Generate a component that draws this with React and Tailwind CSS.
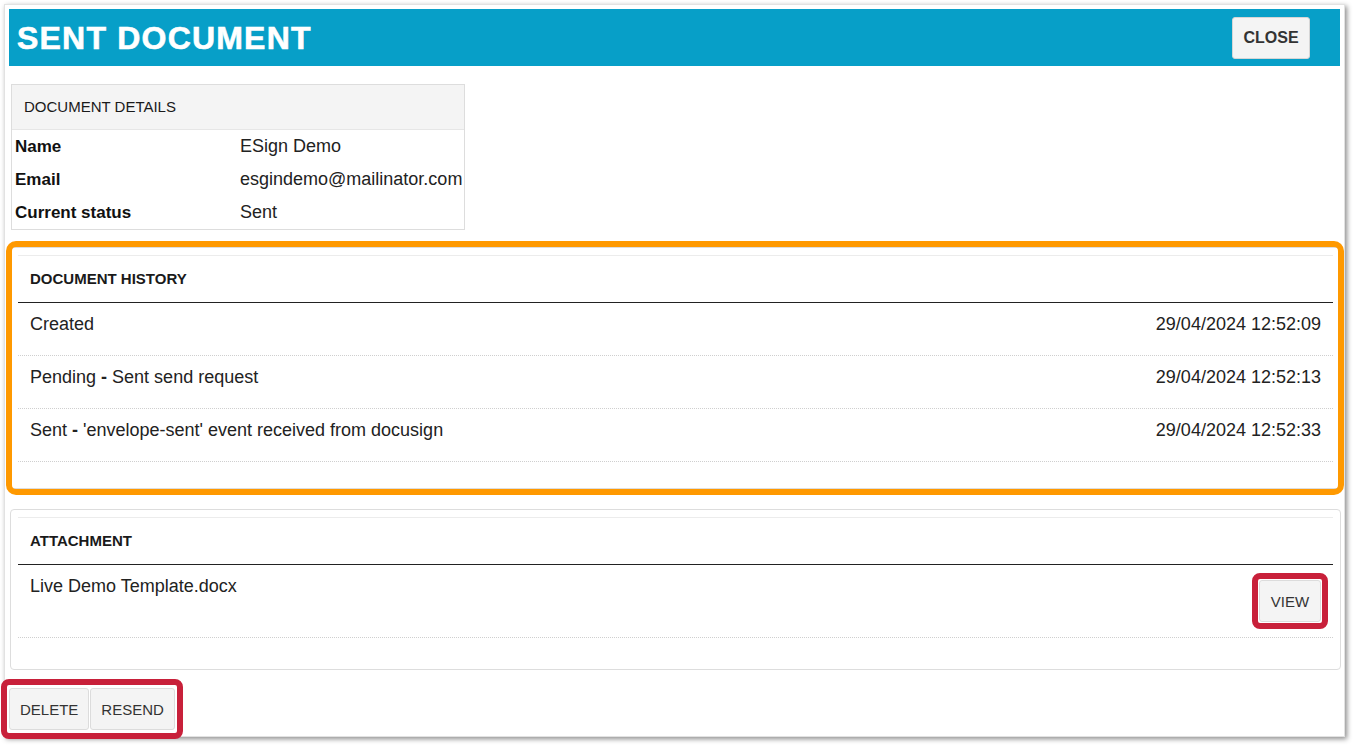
import React from "react";

const font = { fontFamily: '"Liberation Sans", Arial, sans-serif' };

const history = [
  { status: "Created", detail: "", date: "29/04/2024 12:52:09" },
  { status: "Pending", detail: "Sent send request", date: "29/04/2024 12:52:13" },
  { status: "Sent", detail: "'envelope-sent' event received from docusign", date: "29/04/2024 12:52:33" },
];

const details = [
  { label: "Name", value: "ESign Demo" },
  { label: "Email", value: "esgindemo@mailinator.com" },
  { label: "Current status", value: "Sent" },
];

function GrayButton({ children, className = "" }) {
  return (
    <button
      className={`h-[42px] px-[10px] bg-[#f4f4f4] border border-[#dcdcdc] rounded-[3px] text-[15px] text-[#333] leading-none ${className}`}
    >
      {children}
    </button>
  );
}

function SectionHead({ title }) {
  return (
    <div className="border-t border-[#ececec]">
      <div className="h-[46px] flex items-center px-3 text-[15px] font-bold text-[#1a1a1a]">{title}</div>
      <div className="h-px bg-[#222]"></div>
    </div>
  );
}

export default function App() {
  return (
    <div className="min-h-screen bg-white text-[#1f1f1f]" style={font}>
      <div className="ml-[4px] pt-[4px]">
        <div className="w-[1341px] h-[733px] border border-[#e2e2e2] bg-white p-[4px] shadow-[2px_2px_5px_rgba(0,0,0,0.45)]">
          {/* Header */}
          <div className="h-[57px] bg-[#079fc8] flex items-center justify-between pl-[8px] pr-[30px]">
            <h1 className="text-[32px] font-bold text-white tracking-[1.2px] leading-none [-webkit-text-stroke:0.6px_white]">
              SENT DOCUMENT
            </h1>
            <button className="w-[78px] h-[42px] bg-[#f4f4f4] border border-[#d6d6d6] rounded-[3px] text-[16px] font-bold text-[#333] leading-none">
              CLOSE
            </button>
          </div>

          {/* Document details */}
          <div className="mt-[18px] ml-[2px] w-[454px] border border-[#dddddd]">
            <div className="h-[45px] bg-[#f4f4f4] border-b border-[#e6e6e6] flex items-center px-3 text-[15px] text-[#1a1a1a]">
              DOCUMENT DETAILS
            </div>
            {details.map((d) => (
              <div key={d.label} className="h-[33px] grid grid-cols-[226px_1fr] items-center text-[17px]">
                <span className="pl-[3px] font-bold text-[#111]">{d.label}</span>
                <span className="pl-[2px] text-[18px] text-[#222]">{d.value}</span>
              </div>
            ))}
          </div>

          {/* Document history */}
          <div className="relative mt-[17px] ml-[1px] w-[1331px] h-[242px] border border-[#dddddd] rounded-[4px] px-[7px] pt-[7px]">
            <SectionHead title="DOCUMENT HISTORY" />
            {history.map((h) => (
              <div
                key={h.date}
                className="h-[53px] flex justify-between px-3 pt-[11px] border-b border-dotted border-[#cfcfcf] text-[18px] leading-5 text-[#222]"
              >
                <span>
                  {h.status}
                  {h.detail && (
                    <>
                      {" "}
                      <b>-</b> {h.detail}
                    </>
                  )}
                </span>
                <span>{h.date}</span>
              </div>
            ))}
            <div className="absolute -left-[5px] -right-[4px] -top-[7px] -bottom-[7px] border-[6px] border-[#ff9900] rounded-[10px] pointer-events-none"></div>
          </div>

          {/* Attachment */}
          <div className="mt-[20px] ml-[1px] w-[1331px] h-[161px] border border-[#dddddd] rounded-[4px] px-[7px] pt-[7px]">
            <SectionHead title="ATTACHMENT" />
            <div className="h-[73px] flex justify-between items-start px-3 pt-[11px] border-b border-dotted border-[#cfcfcf] text-[18px] leading-5 text-[#222]">
              <span>Live Demo Template.docx</span>
              <div className="relative mt-[4px]">
                <GrayButton className="w-[62px] h-[41px] px-0">VIEW</GrayButton>
                <div className="absolute -inset-[7px] border-[6px] border-[#c8203a] rounded-[8px] pointer-events-none"></div>
              </div>
            </div>
          </div>

          {/* Actions */}
          <div className="relative mt-[18px] inline-flex gap-[1px]">
            <GrayButton>DELETE</GrayButton>
            <GrayButton>RESEND</GrayButton>
            <div className="absolute -left-[8px] -right-[8px] -top-[9px] -bottom-[9px] border-[6px] border-[#c8203a] rounded-[8px] pointer-events-none"></div>
          </div>
        </div>
      </div>
    </div>
  );
}
